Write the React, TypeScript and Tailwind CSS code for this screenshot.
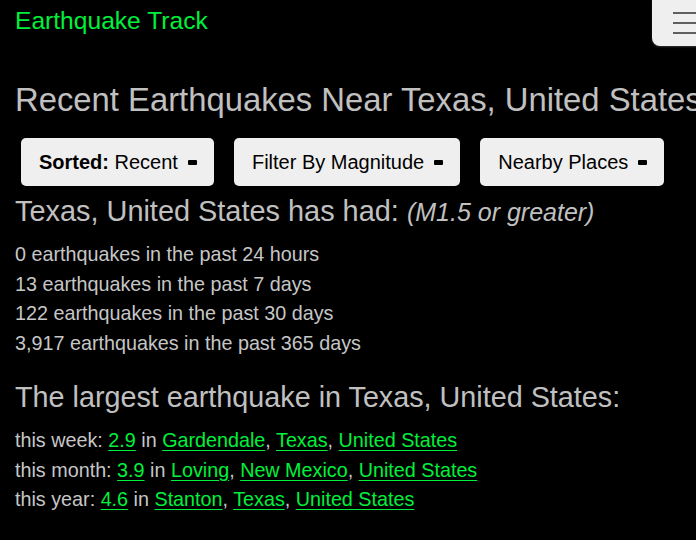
import React from "react";

const G = "text-[#00f03c] underline decoration-1 underline-offset-[3px]";

function Btn({ children }: { children: React.ReactNode }) {
  return (
    <div className="h-[48px] flex items-center rounded-[5px] bg-[#efefef] pl-[18px] pr-[17px] text-[20px] leading-[24px] text-black whitespace-nowrap">
      <span>{children}</span>
      <span className="ml-[10px] w-[9px] h-[5px] bg-black rounded-[1px]" />
    </div>
  );
}

export default function App() {
  return (
    <div
      className="relative w-full h-[540px] overflow-hidden bg-black"
      style={{ fontFamily: '"Liberation Sans", Arial, sans-serif' }}
    >
      <div className="absolute left-[652px] top-[-8px] w-[70px] h-[54px] rounded-[8px] bg-[#efefef] shadow-[0_1px_2px_rgba(255,255,255,0.2)] flex flex-col justify-center gap-[8px] pl-[21px] pt-[8px]">
        <div className="h-[2px] w-[30px] bg-[#606060]" />
        <div className="h-[2px] w-[30px] bg-[#606060]" />
        <div className="h-[2px] w-[30px] bg-[#606060]" />
      </div>

      <div className="pl-[15px] pt-[7px]">
        <div className="text-[24.6px] leading-[28px] text-[#00f03c]">Earthquake Track</div>

        <h1 className="mt-[45px] text-[32.8px] leading-[40px] text-[#c0c0c0] whitespace-nowrap">
          Recent Earthquakes Near Texas, United States
        </h1>

        <div className="mt-[18px] ml-[6px] flex gap-[20px]">
          <Btn>
            <b>Sorted:</b> Recent
          </Btn>
          <Btn>Filter By Magnitude</Btn>
          <Btn>Nearby Places</Btn>
        </div>

        <div className="mt-[8px] text-[28.9px] leading-[34px] text-[#c0c0c0] whitespace-nowrap">
          Texas, United States has had:{" "}
          <i className="text-[25px]">(M1.5 or greater)</i>
        </div>

        <div className="mt-[11px] text-[19.75px] leading-[29.7px] text-[#c6c6c6]">
          <div>0 earthquakes in the past 24 hours</div>
          <div>13 earthquakes in the past 7 days</div>
          <div>122 earthquakes in the past 30 days</div>
          <div>3,917 earthquakes in the past 365 days</div>
        </div>

        <div className="mt-[21px] text-[28.75px] leading-[34px] text-[#c0c0c0] whitespace-nowrap">
          The largest earthquake in Texas, United States:
        </div>

        <div className="mt-[12px] text-[19.75px] leading-[29.7px] text-[#c6c6c6]">
          <div>
            this week: <a className={G}>2.9</a> in <a className={G}>Gardendale</a>,{" "}
            <a className={G}>Texas</a>, <a className={G}>United States</a>
          </div>
          <div>
            this month: <a className={G}>3.9</a> in <a className={G}>Loving</a>,{" "}
            <a className={G}>New Mexico</a>, <a className={G}>United States</a>
          </div>
          <div>
            this year: <a className={G}>4.6</a> in <a className={G}>Stanton</a>,{" "}
            <a className={G}>Texas</a>, <a className={G}>United States</a>
          </div>
        </div>
      </div>
    </div>
  );
}
